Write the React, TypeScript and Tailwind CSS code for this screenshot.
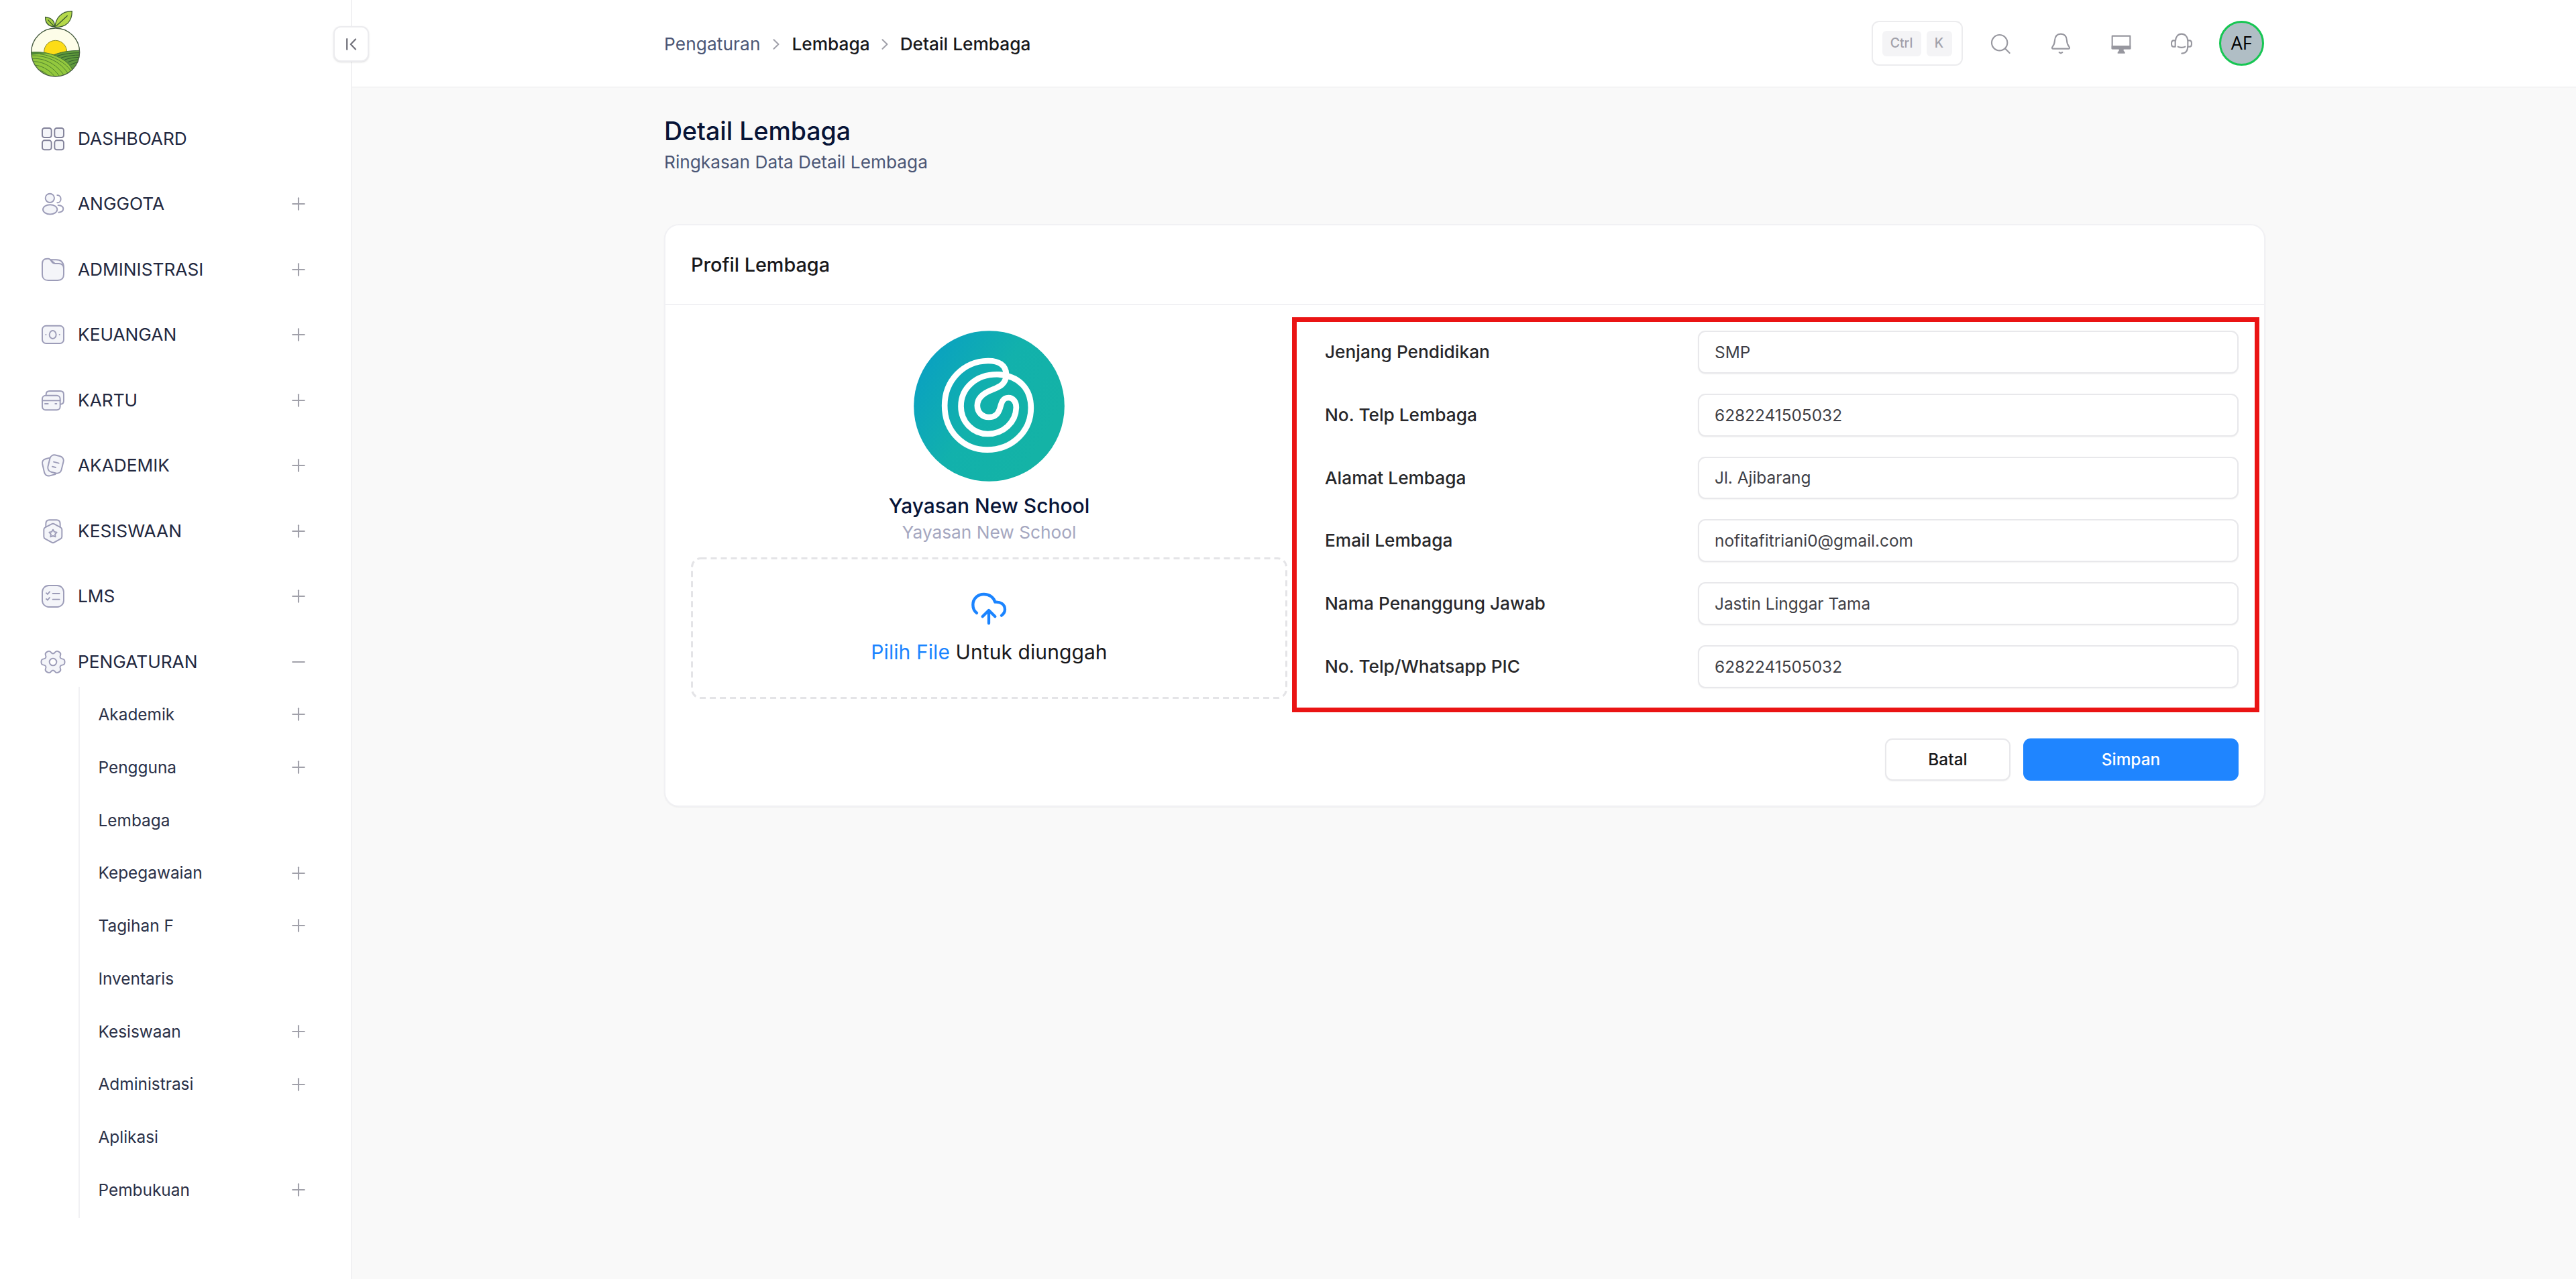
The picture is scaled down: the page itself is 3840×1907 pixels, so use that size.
import type { ReactNode } from 'react';
import { Minus, Plus } from 'lucide-react';
import clsx from 'clsx';

interface MenuItem {
  label: string;
  icon: ReactNode;
  expandable?: boolean;
  children?: { label: string; expandable?: boolean }[];
}

// six teeth, smoothed with a closed quadratic spline
function gearPath() {
  const pts: [number, number][] = [];
  for (let i = 0; i < 6; i++) {
    for (const [da, r] of [[-13, 54], [13, 54], [22, 38], [38, 38]]) {
      const a = ((i * 60 + da) * Math.PI) / 180;
      pts.push([51 + r * Math.cos(a), 51 + r * Math.sin(a)]);
    }
  }
  const mid = (i: number) => {
    const p = pts[i % pts.length];
    const q = pts[(i + 1) % pts.length];
    return `${((p[0] + q[0]) / 2).toFixed(1)} ${((p[1] + q[1]) / 2).toFixed(1)}`;
  };
  return `M${mid(0)} ${pts.map((_, i) => {
    const p = pts[(i + 1) % pts.length];
    return `Q${p[0].toFixed(1)} ${p[1].toFixed(1)} ${mid(i + 1)}`;
  }).join(' ')}Z`;
}

function MenuIcon({ children, dark }: { children: ReactNode; dark?: boolean }) {
  return (
    <svg
      viewBox="0 0 102 102"
      className={clsx('size-[34px] shrink-0 overflow-visible', dark ? 'text-[#82829a]' : 'text-[#9c9cb8]')}
      fill="#f4f5f9"
      stroke="currentColor"
      strokeWidth="5.8"
      strokeLinecap="round"
      strokeLinejoin="round"
    >
      {children}
    </svg>
  );
}

const menu: MenuItem[] = [
  {
    label: 'DASHBOARD',
    icon: (
      <MenuIcon dark>
        <rect x="3" y="3" width="41" height="42" rx="10" />
        <rect x="58" y="3" width="41" height="42" rx="10" />
        <rect x="3" y="58" width="41" height="42" rx="10" />
        <rect x="58" y="58" width="41" height="42" rx="10" />
      </MenuIcon>
    ),
  },
  {
    label: 'ANGGOTA',
    expandable: true,
    icon: (
      <MenuIcon>
        <circle cx="37" cy="25" r="20" />
        <ellipse cx="38" cy="76" rx="32" ry="21.5" />
        <path fill="none" d="M70 12C80 12 86 20 86 29S80 46 70 46" />
        <path fill="none" d="M74 57C88 58 97 64 97 73S88 88 76 89" />
      </MenuIcon>
    ),
  },
  {
    label: 'ADMINISTRASI',
    expandable: true,
    icon: (
      <MenuIcon>
        <path d="M40 7H65C84 7 97 16 99 38V50L60 25Z" />
        <path d="M3 25C3 9 10 2 25 2H30C38 2 41 7 45 15C49 22 53 24 61 24H78C90 25 99 32 99 46V72C99 91 91 99 72 99H30C11 99 3 91 3 72Z" />
      </MenuIcon>
    ),
  },
  {
    label: 'KEUANGAN',
    expandable: true,
    icon: (
      <MenuIcon>
        <rect x="3" y="11" width="96" height="79" rx="17" />
        <ellipse cx="50" cy="51" rx="15" ry="18" />
        <path d="M19 51h.5M80 51h.5" />
      </MenuIcon>
    ),
  },
  {
    label: 'KARTU',
    expandable: true,
    icon: (
      <MenuIcon>
        <path d="M20 29V25C20 14 25 9 36 9H83C94 9 99 14 99 25V53C99 63 94 68 83 68H70Z" />
        <rect x="3" y="29" width="80" height="65" rx="15" />
        <path d="M3 52H83M15 66H29M61 66H67" />
      </MenuIcon>
    ),
  },
  {
    label: 'AKADEMIK',
    expandable: true,
    icon: (
      <MenuIcon>
        <path d="M36 17L20 21C6 24 1 33 4 46L12 81C15 94 24 100 37 97L62 90Z" />
        <rect x="32" y="6" width="62" height="78" rx="20" transform="rotate(14 63 45)" />
        <path d="M54 35L77 41M48 56L63 60" />
      </MenuIcon>
    ),
  },
  {
    label: 'KESISWAAN',
    expandable: true,
    icon: (
      <MenuIcon>
        <path d="M19 34V18C19 6 24 1 35 1H67C78 1 83 6 83 18V34Z" />
        <path d="M45 19Q51 16 57 19L85 34Q91 37 91 44V76Q91 82 85 85L57 101Q51 105 45 101L16 85Q10 82 10 76V44Q10 37 16 34Z" />
        <path d="M51 44L57 54L68 56L60 65L62 76L51 72L40 76L42 65L34 56L45 54Z" />
      </MenuIcon>
    ),
  },
  {
    label: 'LMS',
    expandable: true,
    icon: (
      <MenuIcon>
        <rect x="3" y="3" width="96" height="96" rx="29" />
        <path fill="none" d="M21 37L27 42L36 31M21 63L27 68L36 57M50 39H80M50 65H80" />
      </MenuIcon>
    ),
  },
  {
    label: 'PENGATURAN',
    expandable: true,
    icon: (
      <MenuIcon>
        <path d={gearPath()} />
        <circle cx="51" cy="51" r="16" fill="#fff" />
      </MenuIcon>
    ),
    children: [
      { label: 'Akademik', expandable: true },
      { label: 'Pengguna', expandable: true },
      { label: 'Lembaga' },
      { label: 'Kepegawaian', expandable: true },
      { label: 'Tagihan F', expandable: true },
      { label: 'Inventaris' },
      { label: 'Kesiswaan', expandable: true },
      { label: 'Administrasi', expandable: true },
      { label: 'Aplikasi' },
      { label: 'Pembukuan', expandable: true },
    ],
  },
];

const fields = [
  { label: 'Jenjang Pendidikan', value: 'SMP' },
  { label: 'No. Telp Lembaga', value: '6282241505032' },
  { label: 'Alamat Lembaga', value: 'Jl. Ajibarang' },
  { label: 'Email Lembaga', value: 'nofitafitriani0@gmail.com' },
  { label: 'Nama Penanggung Jawab', value: 'Jastin Linggar Tama' },
  { label: 'No. Telp/Whatsapp PIC', value: '6282241505032' },
];

function FruitLogo() {
  return (
    <svg viewBox="72 42 232 308" className="h-[102.67px] w-[77.33px]" fill="none" strokeLinejoin="round">
      <defs>
        <clipPath id="fruit">
          <circle cx="188" cy="234" r="108" />
        </clipPath>
      </defs>
      <g clipPath="url(#fruit)">
        <rect x="78" y="124" width="220" height="220" fill="#fdfde8" />
        <circle cx="188" cy="232" r="51" fill="#fddc17" stroke="#8a8a2a" strokeWidth="3" />
        <path d="M170 250C210 232 250 226 300 226V344H200Z" fill="#5f9a3c" stroke="#3f6a34" strokeWidth="3" />
        <path d="M196 250C230 240 265 236 300 236M214 258C240 250 270 246 300 246M230 267C250 260 275 256 300 256M244 278C262 270 280 267 300 266M256 290C270 282 285 278 300 276" stroke="#2f5a2c" strokeWidth="3" />
        <path d="M76 234C120 230 160 236 195 252C235 270 255 290 268 320L240 350H76Z" fill="#93c83e" stroke="#3f6a34" strokeWidth="3" />
        <path d="M76 234C110 231 130 234 150 238C120 242 100 244 76 246Z" fill="#4f8838" />
        <path
          d="M80 250C140 246 210 270 248 335M80 262C130 258 190 280 228 340M84 276C125 272 175 295 208 344M90 292C120 290 160 310 186 344M100 312C120 310 145 325 162 344M120 242C180 250 235 280 260 322"
          stroke="#4c7d2e"
          strokeWidth="3"
        />
      </g>
      <circle cx="188" cy="234" r="108" stroke="#4a5f44" strokeWidth="4" />
      <path d="M186 122C188 84 212 50 262 50C262 94 238 122 186 122Z" fill="#b5d94a" stroke="#3c5a30" strokeWidth="4" />
      <path d="M184 120C156 118 142 102 143 76C172 80 186 94 184 120Z" fill="#a6d044" stroke="#3c5a30" strokeWidth="4" />
      <path d="M190 118L242 70M182 118L154 88" stroke="#3c5a30" strokeWidth="4" />
    </svg>
  );
}

function Sidebar() {
  return (
    <aside className="relative flex w-[525px] shrink-0 flex-col border-r-2 border-[#f1f1f3] bg-white">
      <div className="h-[169px] pt-[14px] pl-11">
        <FruitLogo />
      </div>

      <button className="absolute top-[39px] -right-[27px] flex size-[53px] items-center justify-center rounded-[11px] border-2 border-[#ececef] bg-white shadow-sm">
        <svg viewBox="0 0 16 18" className="h-[18px] w-4" fill="none" stroke="#71717a" strokeWidth="2.2" strokeLinecap="round" strokeLinejoin="round">
          <path d="M1.2 1.2V16.8M14 1.5L6.8 9L14 16.5" />
        </svg>
      </button>

      <nav className="flex flex-col gap-[22.5px] pr-[63px]">
        {menu.map((item) => (
          <div key={item.label}>
            <div className="flex h-[75px] items-center pl-[62px]">
              {item.icon}
              <span className="ml-5 flex-1 text-[26.25px] text-[#22283f]">{item.label}</span>
              {item.expandable &&
                (item.children ? (
                  <Minus className="size-[30px] text-[#a1a1aa]" strokeWidth={1.7} />
                ) : (
                  <Plus className="size-[30px] text-[#a1a1aa]" strokeWidth={1.7} />
                ))}
            </div>
            {item.children && (
              <div className="ml-[117px] border-l-2 border-[#f1f1f4] py-0.5">
                {item.children.map((sub) => (
                  <div key={sub.label} className="flex h-[78.75px] items-center pl-[27.5px]">
                    <span className="flex-1 text-[24.4px] text-[#2b3148]">{sub.label}</span>
                    {sub.expandable && <Plus className="size-[30px] text-[#a1a1aa]" strokeWidth={1.7} />}
                  </div>
                ))}
              </div>
            )}
          </div>
        ))}
      </nav>
    </aside>
  );
}

function HeaderIcon({ children }: { children: ReactNode }) {
  return (
    <svg viewBox="0 0 96 96" className="size-8" fill="none" stroke="#97979f" strokeWidth="6.3" strokeLinecap="round" strokeLinejoin="round">
      {children}
    </svg>
  );
}

function Chevron() {
  return (
    <svg viewBox="0 0 10 16" className="h-4 w-2.5" fill="none" stroke="#a1a1aa" strokeWidth="2" strokeLinecap="round" strokeLinejoin="round">
      <path d="M1.5 1.2L8.5 8L1.5 14.8" />
    </svg>
  );
}

function Header() {
  return (
    <header className="h-[131px] border-b-2 border-[#f4f4f5] bg-white pl-[465px]">
      <div className="flex h-full w-[2385px] items-center justify-between">
        <div className="flex items-center pt-0.5 text-[26.25px] font-medium text-[#18181b]">
          <span className="font-normal tracking-[0.1px] text-[#4b5675]">Pengaturan</span>
          <span className="px-[18.5px]"><Chevron /></span>
          <span>Lembaga</span>
          <span className="px-[17.5px]"><Chevron /></span>
          <span>Detail Lembaga</span>
        </div>

        <div className="flex items-center">
          <div className="mr-10 flex h-[67.5px] items-center gap-2 rounded-[11px] border-2 border-[#ececee] px-3.5 text-[19.5px] font-medium text-[#a1a1aa]">
            <kbd className="flex h-[38px] w-[58px] items-center justify-center rounded-md bg-[#f4f4f6] font-[inherit]">Ctrl</kbd>
            <kbd className="flex h-[38px] w-[38px] items-center justify-center rounded-md bg-[#f4f4f6] font-[inherit]">K</kbd>
          </div>
          <div className="flex items-center gap-[58px]">
            <HeaderIcon>
              <circle cx="44" cy="44" r="35" />
              <path d="M70 71L89 90" />
            </HeaderIcon>
            <HeaderIcon>
              <path d="M48 5C30 5 22 18 21 34C20 50 18 54 11 62C7 67 9 71 14 71H82C87 71 89 67 85 62C78 54 76 50 75 34C74 18 66 5 48 5Z" />
              <path d="M41 87L48 91L55 87" />
            </HeaderIcon>
            <HeaderIcon>
              <path d="M8 14H88V70H8Z" />
              <path fill="#97979f" stroke="none" d="M5 57H91V73H59V80L65 86V92H32V86L38 80V73H5Z" />
            </HeaderIcon>
            <HeaderIcon>
              <path d="M21 36C21 18 32 5 48 5S76 18 76 36V58C76 80 66 92 49 92" />
              <path d="M20 34H12C6 34 3 40 3 48S6 62 12 62H20ZM77 34H84C90 34 93 40 93 48S90 62 84 62H77" />
              <path d="M32 62C40 67 56 67 64 62" />
            </HeaderIcon>
          </div>
          <div className="ml-10 flex size-[67.5px] items-center justify-center rounded-full border-[3px] border-[#17c653] bg-[#b0bec5] font-['Open_Sans',sans-serif] text-[27px] text-black">
            AF
          </div>
        </div>
      </div>
    </header>
  );
}

function SchoolLogo() {
  return (
    <svg viewBox="34 40 674 675" className="size-[225px]" fill="none">
      <defs>
        <linearGradient id="teal" x1="0.05" y1="0.25" x2="0.85" y2="0.75">
          <stop offset="0" stopColor="#0aa2c0" />
          <stop offset="0.5" stopColor="#12b1ac" />
          <stop offset="1" stopColor="#14b3a6" />
        </linearGradient>
      </defs>
      <circle cx="371" cy="377.5" r="337" fill="url(#teal)" />
      <path
        d="M448 235C445 195 415 174 365 175C255 177 172 265 172 375C172 490 255 573 362 573C475 573 558 490 558 385C558 300 505 243 415 236C310 232 245 300 245 378C245 450 300 502 365 502C435 502 490 450 492 385C493 356 476 340 457 340C430 340 426 365 420 385C412 412 398 427 370 427C340 427 318 405 318 375C318 340 345 320 380 306C415 292 446 282 448 235Z"
        stroke="#fff"
        strokeWidth="26"
      />
    </svg>
  );
}

function UploadBox() {
  return (
    <div className="relative mt-4 flex h-[211px] w-full flex-col items-center pt-[52px]">
      <svg className="absolute inset-0 size-full" fill="none">
        <rect x="1.5" y="1.5" width="886" height="208" rx="13" stroke="#e4e4e7" strokeWidth="3" strokeDasharray="9 6" />
      </svg>
      <svg viewBox="296 1208 158 146" className="h-[48.67px] w-[52.67px]" fill="none" stroke="#1b84ff" strokeWidth="13" strokeLinecap="round" strokeLinejoin="round">
        <path d="M320 1301C306 1290 303 1277 303 1264C303 1236 325 1217 352 1217C377 1217 396 1232 402 1252C426 1250 446 1262 446 1285C446 1298 440 1305 431 1312" />
        <path d="M374 1347V1290M346 1317L374 1289L402 1317" />
      </svg>
      <p className="mt-5 text-[30px] leading-10 tracking-[0.08px] text-[#18181b]">
        <span className="text-[#1b84ff]">Pilih File</span> Untuk diunggah
      </p>
    </div>
  );
}

export default function App() {
  return (
    <div className="flex h-[1907px] w-[3840px] overflow-hidden bg-[#f9f9f9] font-['Inter',sans-serif]">
      <Sidebar />
      <div className="flex flex-1 flex-col">
        <Header />
        <main className="ml-[465px] w-[2387px] pt-[37px]">
          <h1 className="text-[37.5px] leading-[56px] font-medium text-[#071437]">Detail Lembaga</h1>
          <p className="text-[26.25px] leading-9 text-[#4b5675]">Ringkasan Data Detail Lembaga</p>

          <section className="mt-[74px] rounded-[22px] border-2 border-[#f1f1f4] bg-white shadow-xs">
            <div className="border-b-2 border-[#f1f1f4] px-[38px]">
              <h3 className="text-[28.8px] leading-[117px] font-medium text-[#18181b]">Profil Lembaga</h3>
            </div>

            <div className="flex px-[38px] pt-[38px]">
              <div className="flex w-[889px] flex-col items-center">
                <SchoolLogo />
                <p className="mt-[17px] text-[30px] leading-[38px] font-medium text-[#071437]">Yayasan New School</p>
                <p className="text-[26.25px] leading-[42px] text-[#a5a7c0]">Yayasan New School</p>
                <UploadBox />
              </div>

              {/* highlighted form block */}
              <div className="-mt-5 -mr-[30.5px] ml-[7px] flex h-[589px] flex-1 flex-col gap-[30px] border-[7px] border-[#ea1414] pt-[13px] pr-[23.5px] pl-[42px]">
                {fields.map((f) => (
                  <div key={f.label} className="flex h-[63.75px] items-center">
                    <label className="w-[556px] text-[26.25px] font-medium text-[#27272a]">{f.label}</label>
                    <input
                      readOnly
                      value={f.value}
                      className="h-full flex-1 rounded-[11px] border-2 border-[#e8e8eb] bg-white px-[23px] text-[24.4px] text-[#3f3f46] shadow-xs outline-none"
                    />
                  </div>
                ))}
              </div>
            </div>

            <div className="flex justify-end gap-[19px] px-[38px] pt-[39px] pb-[37px] text-[24.4px] font-medium">
              <button className="h-[63px] w-[187px] rounded-[11px] border-2 border-[#e8e8eb] bg-white text-[#18181b] shadow-xs">Batal</button>
              <button className="h-[63px] w-[321px] rounded-[11px] bg-[#1f85ff] text-white">Simpan</button>
            </div>
          </section>
        </main>
      </div>
    </div>
  );
}
